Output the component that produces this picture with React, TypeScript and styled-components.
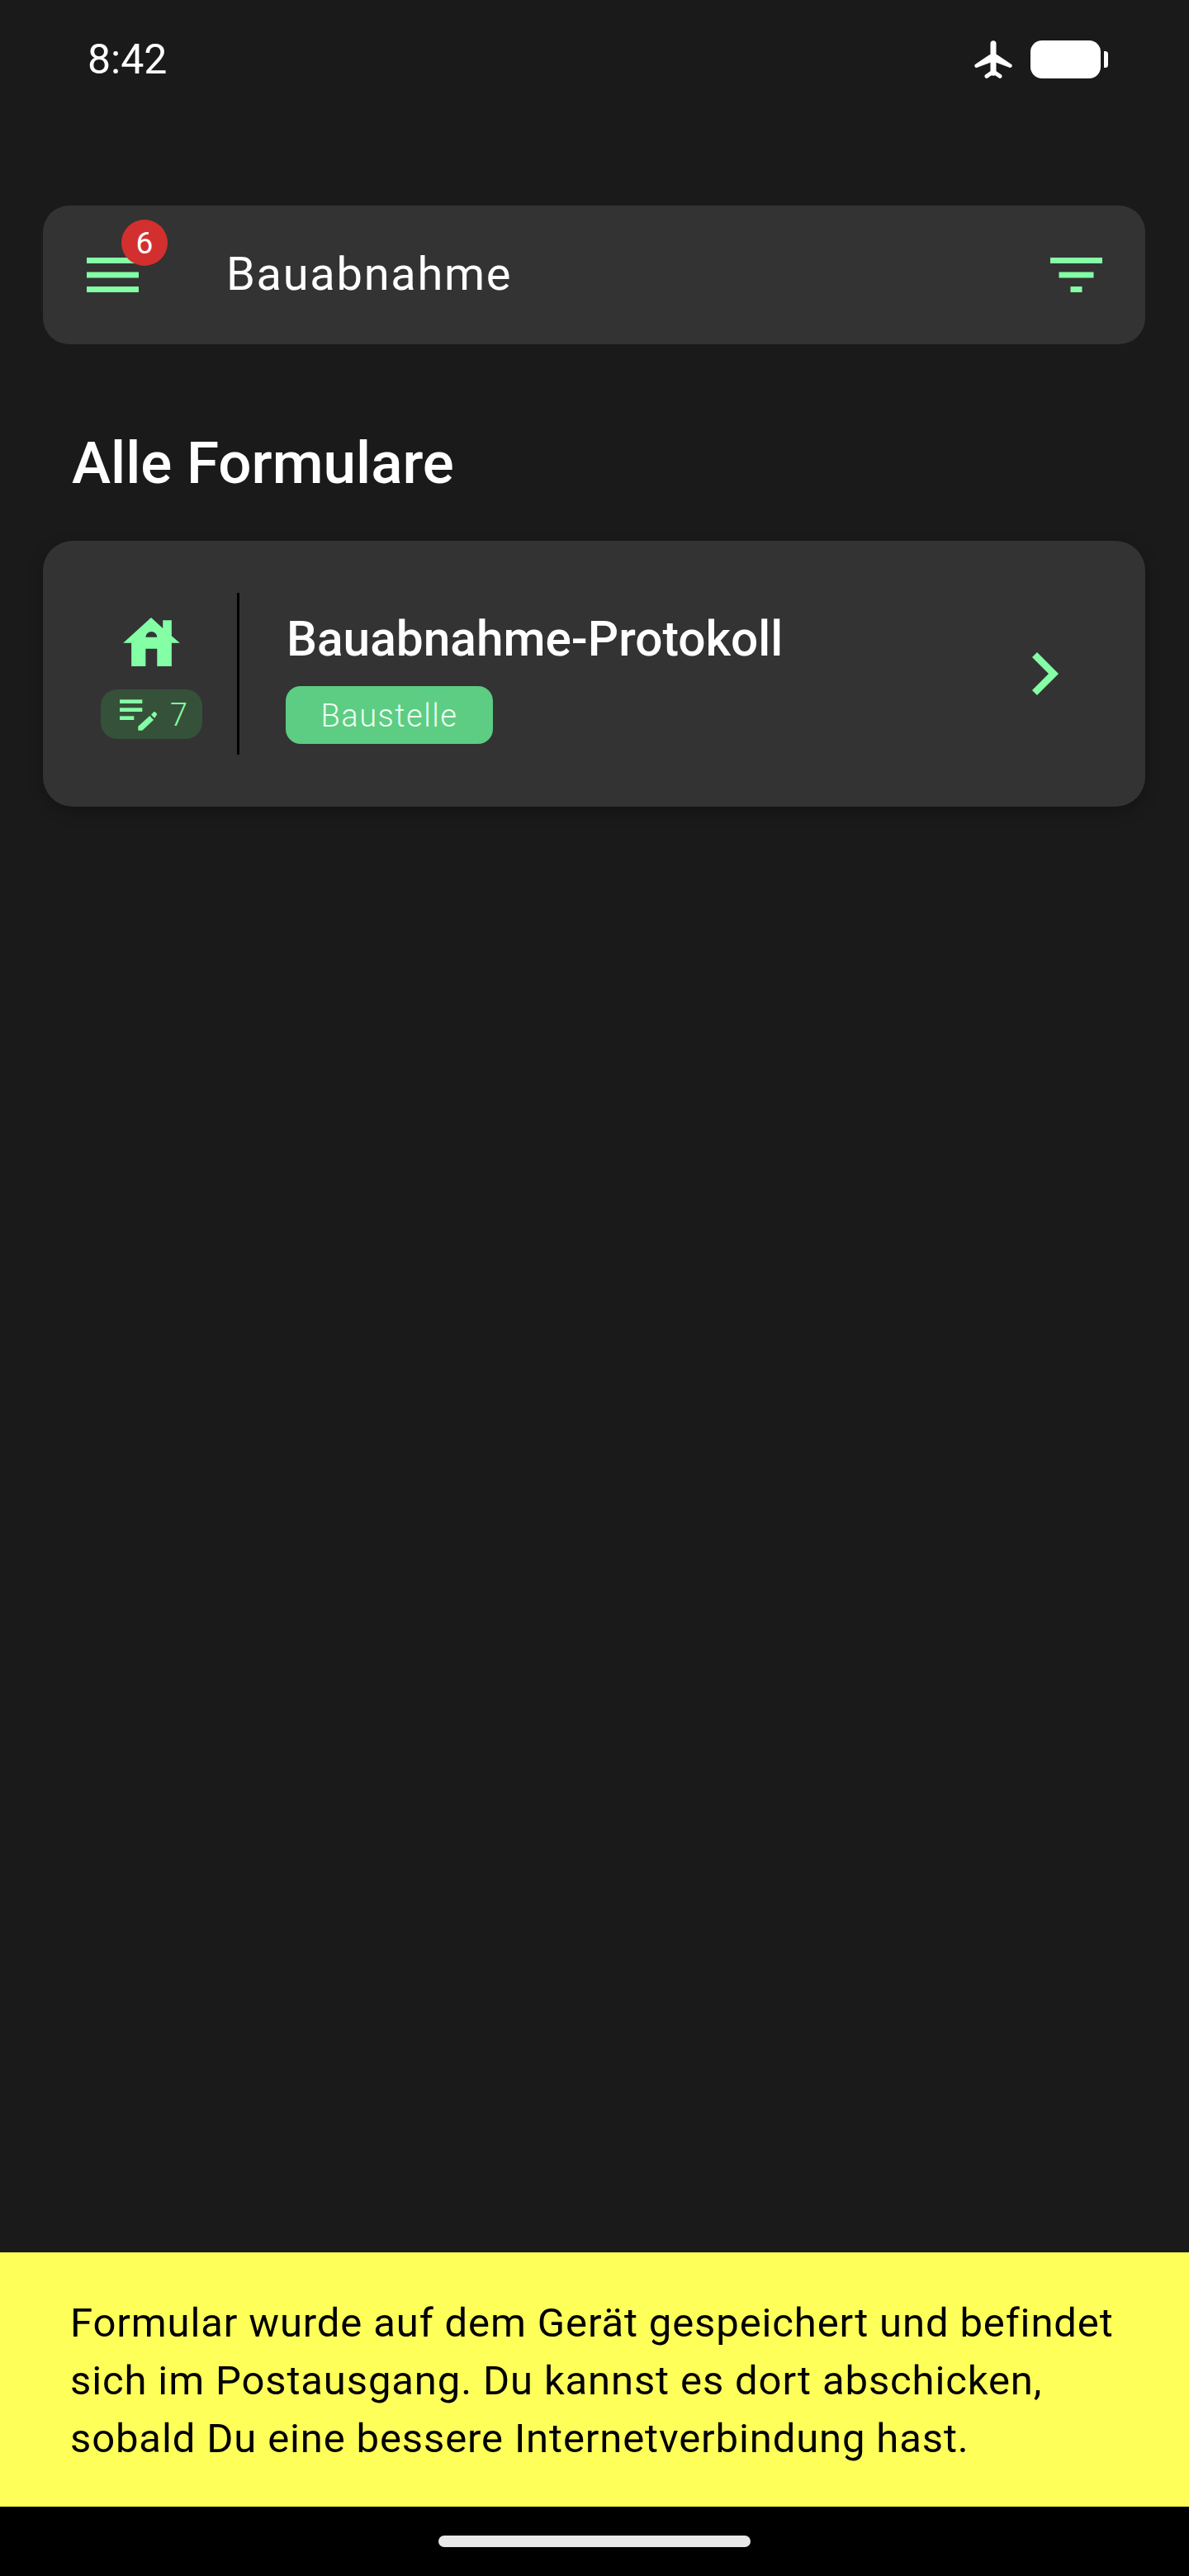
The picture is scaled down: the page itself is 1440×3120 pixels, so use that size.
import { FC } from "react";
import styled, { createGlobalStyle } from "styled-components";

const GREEN = "#84ffa6";

const GlobalStyle = createGlobalStyle`
	* {
		box-sizing: border-box;
	}

	html,
	body {
		margin: 0;
		padding: 0;
		background: #1a1a1a;
		font-family: Roboto, "Liberation Sans", sans-serif;
	}
`;

const MenuIcon: FC = () => (
	<svg width="63" height="42" viewBox="0 0 63 42" fill={GREEN}>
		<rect x="0" y="0" width="63" height="7" />
		<rect x="0" y="17.5" width="63" height="7" />
		<rect x="0" y="35" width="63" height="7" />
	</svg>
);

const FilterIcon: FC = () => (
	<svg width="63" height="42" viewBox="0 0 63 42" fill={GREEN}>
		<rect x="0" y="0" width="63" height="7" />
		<rect x="10.5" y="17.5" width="42" height="7" />
		<rect x="24.5" y="35" width="14" height="7" />
	</svg>
);

const PlaneIcon: FC = () => (
	<svg width="46" height="46" viewBox="60 57 138 138" fill="#fff" stroke="#fff" strokeLinecap="round" strokeLinejoin="round">
		<path d="M129 68V175" strokeWidth="21" fill="none" />
		<path d="M68 149L118 115H140L190 149L134 128H124Z" strokeWidth="14" />
		<path d="M105 187L129 170L153 187" strokeWidth="15" fill="none" />
	</svg>
);

const BatteryIcon: FC = () => (
	<svg width="94" height="46" viewBox="0 0 94 46" fill="#fff">
		<rect x="0" y="0" width="85" height="46" rx="14" />
		<path d="M89 13h1.5a3.5 3.5 0 0 1 3.5 3.5v13a3.5 3.5 0 0 1-3.5 3.5H89Z" />
	</svg>
);

const HouseIcon: FC = () => (
	<svg width="69" height="59" viewBox="148 53 207 178" fill={GREEN}>
		<path
			fillRule="evenodd"
			d="M148 146L250 53L293 92V63H325V120L355 146H325V231H272V167H230V231H178V146ZM230 125H272A21 21 0 0 0 230 125Z"
		/>
	</svg>
);

const DraftIcon: FC = () => (
	<svg width="46" height="38" viewBox="138 360 138 114" fill={GREEN}>
		<rect x="138" y="361" width="82" height="14" />
		<rect x="138" y="391" width="82" height="14" />
		<rect x="138" y="421" width="52" height="14" />
		<path d="M205 458L247 420L261 435L220 473H205Z" />
		<path d="M252 416L260 407Q264 403 268 407L272 411Q275 415 271 419L264 428Z" />
	</svg>
);

const ChevronIcon: FC = () => (
	<svg width="32" height="52" viewBox="0 0 32 52" fill={GREEN}>
		<path d="M6 0L32 26L6 52L0 46L20 26L0 6Z" />
	</svg>
);

const App: FC = () => {
	return (
		<Page>
			<GlobalStyle />

			<StatusBar>
				<Time>8:42</Time>
				<StatusIcons>
					<PlaneIcon />
					<BatteryIcon />
				</StatusIcons>
			</StatusBar>

			<Content>
				<SearchBar>
					<MenuButton>
						<MenuIcon />
						<Badge>6</Badge>
					</MenuButton>
					<BarTitle>Bauabnahme</BarTitle>
					<FilterIcon />
				</SearchBar>

				<SectionTitle>Alle Formulare</SectionTitle>

				<FormCard>
					<CardLead>
						<HouseIcon />
						<DraftChip>
							<DraftIcon />
							<DraftCount>7</DraftCount>
						</DraftChip>
					</CardLead>
					<Divider />
					<CardBody>
						<FormName>Bauabnahme-Protokoll</FormName>
						<Tag>Baustelle</Tag>
					</CardBody>
					<ChevronIcon />
				</FormCard>
			</Content>

			<Snackbar>
				Formular wurde auf dem Gerät gespeichert und befindet
				<br />
				sich im Postausgang. Du kannst es dort abschicken,
				<br />
				sobald Du eine bessere Internetverbindung hast.
			</Snackbar>

			<NavBar>
				<HomeIndicator />
			</NavBar>
		</Page>
	);
};

export default App;

const Page = styled.div`
	display: flex;
	flex-direction: column;
	width: 1440px;
	height: 3120px;
	overflow: hidden;
	background: #1a1a1a;
`;

const StatusBar = styled.div`
	display: flex;
	align-items: center;
	justify-content: space-between;
	height: 144px;
	padding: 0 98px 0 106px;
`;

const Time = styled.span`
	font-size: 50px;
	color: #fff;
`;

const StatusIcons = styled.div`
	display: flex;
	align-items: center;
	gap: 22px;
`;

const Content = styled.main`
	flex: 1;
	padding: 105px 53px 0 52px;
`;

const SearchBar = styled.div`
	display: flex;
	align-items: center;
	height: 168px;
	padding: 0 52px 0 53px;
	border-radius: 32px;
	background: #333333;
`;

const MenuButton = styled.div`
	position: relative;
	display: flex;
	width: 63px;
`;

const Badge = styled.span`
	position: absolute;
	top: -46px;
	left: 42px;
	display: flex;
	align-items: center;
	justify-content: center;
	width: 56px;
	height: 56px;
	border-radius: 50%;
	background: #d32f2f;
	font-size: 37px;
	color: #fff;
`;

const BarTitle = styled.span`
	flex: 1;
	margin: 0 0 2px 106px;
	font-size: 56px;
	letter-spacing: 1.7px;
	color: #fff;
`;

const SectionTitle = styled.h1`
	margin: 102px 0 0 35px;
	font-size: 71px;
	font-weight: 500;
	line-height: 84px;
	color: #fff;
`;

const FormCard = styled.section`
	display: flex;
	align-items: center;
	height: 322px;
	margin-top: 52px;
	padding: 0 105px 0 70px;
	border-radius: 36px;
	background: #333333;
	box-shadow: 0 6px 18px rgba(0, 0, 0, 0.25);
`;

const CardLead = styled.div`
	display: flex;
	flex-direction: column;
	align-items: center;
	gap: 28px;
	width: 123px;
	padding-top: 11px;
`;

const DraftChip = styled.div`
	display: flex;
	align-items: center;
	justify-content: space-between;
	width: 123px;
	height: 60px;
	padding: 2px 18px 0 23px;
	border-radius: 20px;
	background: #365139;
`;

const DraftCount = styled.span`
	font-size: 38px;
	font-weight: 300;
	color: ${GREEN};
`;

const Divider = styled.div`
	flex-shrink: 0;
	width: 3px;
	height: 196px;
	margin-left: 42px;
	background: #000;
`;

const CardBody = styled.div`
	flex: 1;
	display: flex;
	flex-direction: column;
	align-items: flex-start;
	gap: 23px;
	margin: 9px 0 0 56px;
`;

const FormName = styled.h2`
	margin: 0 0 0 1px;
	font-size: 58.6px;
	font-weight: 500;
	line-height: 68px;
	color: #fff;
`;

const Tag = styled.span`
	display: flex;
	align-items: center;
	justify-content: center;
	width: 251px;
	height: 70px;
	padding-top: 2px;
	border-radius: 18px;
	background: #5ccd82;
	font-size: 38px;
	font-weight: 300;
	letter-spacing: 1.5px;
	color: #f0fff4;
`;

const Snackbar = styled.div`
	height: 308px;
	padding: 51px 0 0 85px;
	background: #ffff5a;
	font-size: 49px;
	line-height: 70px;
	letter-spacing: 0.87px;
	white-space: nowrap;
	color: #000;
`;

const NavBar = styled.div`
	display: flex;
	justify-content: center;
	height: 84px;
	padding-top: 35px;
	background: #000;
`;

const HomeIndicator = styled.div`
	width: 378px;
	height: 14px;
	border-radius: 7px;
	background: #e8e8e8;
`;
